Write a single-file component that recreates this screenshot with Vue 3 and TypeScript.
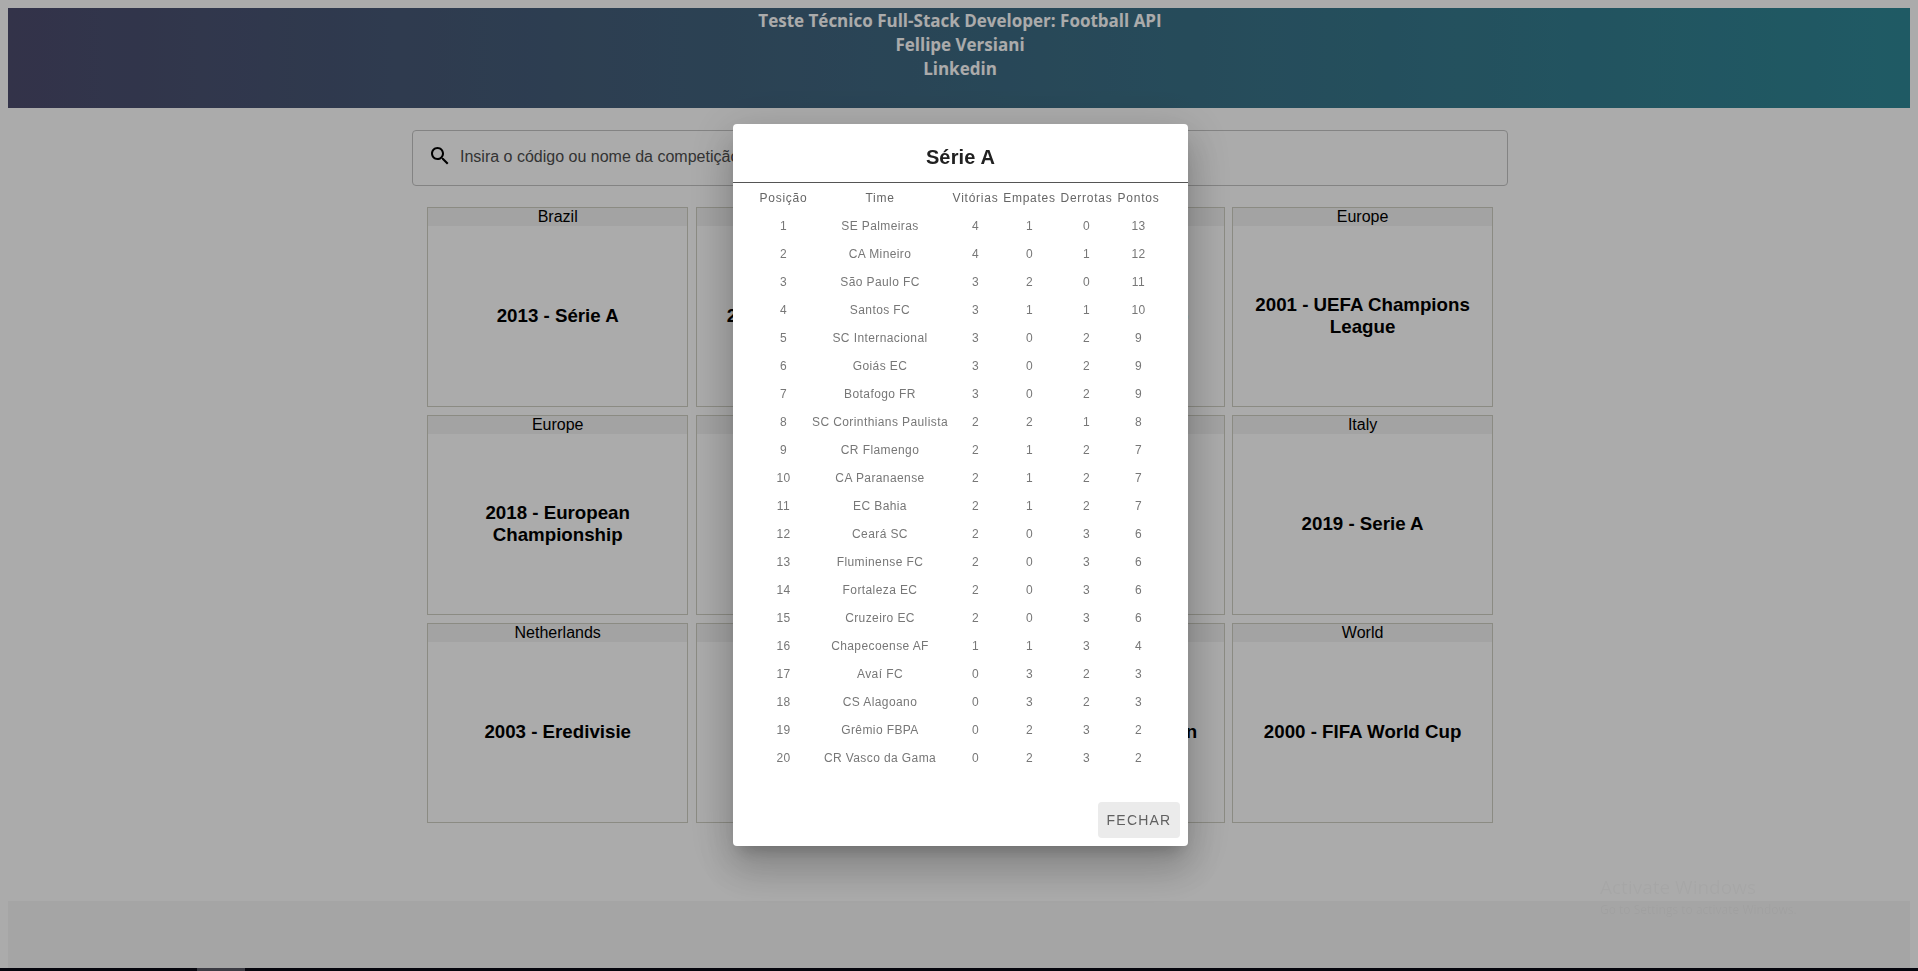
<script setup lang="ts">
interface Competition {
    area: string;
    title: string;
}
interface Standing {
    team: string;
    won: number;
    draw: number;
    lost: number;
    points: number;
}

const competitions: Competition[] = [
    { area: 'Brazil', title: '2013 - Série A' },
    { area: 'England', title: '2021 - Premier League' },
    { area: 'England', title: '2016 - Championship' },
    { area: 'Europe', title: '2001 - UEFA Champions League' },
    { area: 'Europe', title: '2018 - European Championship' },
    { area: 'France', title: '2015 - Ligue 1' },
    { area: 'Germany', title: '2002 - Bundesliga' },
    { area: 'Italy', title: '2019 - Serie A' },
    { area: 'Netherlands', title: '2003 - Eredivisie' },
    { area: 'Portugal', title: '2017 - Primeira Liga' },
    { area: 'Spain', title: '2014 - Primera Division' },
    { area: 'World', title: '2000 - FIFA World Cup' },
];

const standings: Standing[] = [
    { team: 'SE Palmeiras', won: 4, draw: 1, lost: 0, points: 13 },
    { team: 'CA Mineiro', won: 4, draw: 0, lost: 1, points: 12 },
    { team: 'São Paulo FC', won: 3, draw: 2, lost: 0, points: 11 },
    { team: 'Santos FC', won: 3, draw: 1, lost: 1, points: 10 },
    { team: 'SC Internacional', won: 3, draw: 0, lost: 2, points: 9 },
    { team: 'Goiás EC', won: 3, draw: 0, lost: 2, points: 9 },
    { team: 'Botafogo FR', won: 3, draw: 0, lost: 2, points: 9 },
    { team: 'SC Corinthians Paulista', won: 2, draw: 2, lost: 1, points: 8 },
    { team: 'CR Flamengo', won: 2, draw: 1, lost: 2, points: 7 },
    { team: 'CA Paranaense', won: 2, draw: 1, lost: 2, points: 7 },
    { team: 'EC Bahia', won: 2, draw: 1, lost: 2, points: 7 },
    { team: 'Ceará SC', won: 2, draw: 0, lost: 3, points: 6 },
    { team: 'Fluminense FC', won: 2, draw: 0, lost: 3, points: 6 },
    { team: 'Fortaleza EC', won: 2, draw: 0, lost: 3, points: 6 },
    { team: 'Cruzeiro EC', won: 2, draw: 0, lost: 3, points: 6 },
    { team: 'Chapecoense AF', won: 1, draw: 1, lost: 3, points: 4 },
    { team: 'Avaí FC', won: 0, draw: 3, lost: 2, points: 3 },
    { team: 'CS Alagoano', won: 0, draw: 3, lost: 2, points: 3 },
    { team: 'Grêmio FBPA', won: 0, draw: 2, lost: 3, points: 2 },
    { team: 'CR Vasco da Gama', won: 0, draw: 2, lost: 3, points: 2 },
];
</script>

<template>
    <div class="page">
        <header class="top">
            <div>Teste Técnico Full-Stack Developer: Football API</div>
            <div>Fellipe Versiani</div>
            <a class="top-link" href="#">Linkedin</a>
        </header>

        <div class="search">
            <svg class="search-icon" viewBox="0 0 24 24" width="24" height="24">
                <path d="M15.5 14h-.79l-.28-.27C15.41 12.59 16 11.11 16 9.5 16 5.91 13.09 3 9.5 3S3 5.91 3 9.5 5.91 16 9.5 16c1.61 0 3.09-.59 4.23-1.57l.27.28v.79l5 4.99L20.49 19l-4.99-5zm-6 0C7.01 14 5 11.99 5 9.5S7.01 5 9.5 5 14 7.01 14 9.5 11.99 14 9.5 14z" />
            </svg>
            <input class="search-input" type="text" placeholder="Insira o código ou nome da competição">
        </div>

        <main class="cards">
            <article v-for="c in competitions" :key="c.title" class="card">
                <div class="card-area">{{ c.area }}</div>
                <div class="card-title">{{ c.title }}</div>
            </article>
        </main>

        <footer class="bottom" />
    </div>

    <div class="backdrop">
        <section class="dialog">
            <h2 class="dialog-title">Série A</h2>
            <div class="dialog-content">
                <table class="table">
                    <colgroup>
                        <col class="col-pos">
                        <col class="col-team">
                        <col class="col-won">
                        <col class="col-draw">
                        <col class="col-lost">
                        <col class="col-points">
                    </colgroup>
                    <thead>
                        <tr>
                            <th>Posição</th>
                            <th>Time</th>
                            <th>Vitórias</th>
                            <th>Empates</th>
                            <th>Derrotas</th>
                            <th>Pontos</th>
                        </tr>
                    </thead>
                    <tbody>
                        <tr v-for="(s, i) in standings" :key="s.team">
                            <td>{{ i + 1 }}</td>
                            <td>{{ s.team }}</td>
                            <td>{{ s.won }}</td>
                            <td>{{ s.draw }}</td>
                            <td>{{ s.lost }}</td>
                            <td>{{ s.points }}</td>
                        </tr>
                    </tbody>
                </table>
            </div>
            <div class="dialog-actions">
                <button class="close-btn" type="button">Fechar</button>
            </div>
        </section>
    </div>

    <div class="watermark">
        <div class="watermark-title">Activate Windows</div>
        <div class="watermark-sub">Go to Settings to activate Windows.</div>
    </div>

    <div class="taskbar">
        <span class="taskbar-item" />
    </div>
</template>

<style>
html, body {
    margin: 0;
    background: #fff;
    overflow: hidden;
}
</style>

<style scoped>
.page {
    box-sizing: border-box;
    height: 971px;
    padding: 8px 8px 3px;
    display: flex;
    flex-direction: column;
    align-items: center;
    font-family: "Liberation Sans", Arial, sans-serif;
}
.top {
    align-self: stretch;
    height: 100px;
    box-sizing: border-box;
    padding: 1px 0 0 2px;
    text-align: center;
    font-family: "Open Sans", sans-serif;
    font-weight: 700;
    font-size: 17px;
    line-height: 24px;
    color: #fff;
    background: linear-gradient(90deg, #4c4c6e, #2f8796);
}
.top-link {
    color: inherit;
    text-decoration: none;
}
.search {
    box-sizing: border-box;
    width: 1096px;
    height: 56px;
    margin: 22px 0 0 2px;
    padding-left: 15px;
    display: flex;
    align-items: center;
    gap: 8px;
    border: 1px solid #c4c4c4;
    border-radius: 4px;
}
.search-icon {
    flex: none;
    margin-top: -5px;
}
.search-input {
    flex: 1;
    border: 0;
    outline: 0;
    padding: 0 0 2px;
    background: transparent;
    font-family: "Liberation Sans", Arial, sans-serif;
    font-size: 16px;
}
.search-input::placeholder {
    color: #4d4d4d;
    opacity: 1;
}
.cards {
    margin-top: 21px;
    padding-left: 2.3px;
    display: grid;
    grid-template-columns: repeat(4, 261px);
    grid-auto-rows: 200px;
    gap: 8px 7.3px;
}
.card {
    box-sizing: border-box;
    display: flex;
    flex-direction: column;
    border: 1px solid #d0d0c4;
}
.card-area {
    text-align: center;
    font-size: 16px;
    line-height: 18px;
    background: #f3f3f3;
}
.card-title {
    flex: 1;
    display: flex;
    align-items: center;
    justify-content: center;
    padding: 0 16px 1px;
    text-align: center;
    font-size: 18.72px;
    font-weight: 700;
    line-height: 22px;
}
.bottom {
    align-self: stretch;
    margin-top: auto;
    height: 67px;
    background: #f6f6f6;
}
.backdrop {
    position: fixed;
    inset: 0;
    box-sizing: border-box;
    display: flex;
    align-items: center;
    justify-content: center;
    padding: 0 0 1px 3px;
    background: rgba(0, 0, 0, 0.33);
    font-family: "Liberation Sans", Arial, sans-serif;
}
.dialog {
    box-sizing: border-box;
    width: 455px;
    height: 722px;
    display: flex;
    flex-direction: column;
    border-radius: 4px;
    background: #fff;
    box-shadow: 0 11px 15px -7px rgba(0, 0, 0, 0.2), 0 24px 38px 3px rgba(0, 0, 0, 0.14), 0 9px 46px 8px rgba(0, 0, 0, 0.12);
}
.dialog-title {
    margin: 0;
    height: 59px;
    box-sizing: border-box;
    padding-top: 20px;
    border-bottom: 1px solid #555;
    text-align: center;
    font-size: 20px;
    font-weight: 700;
    line-height: 26px;
    letter-spacing: 0.15px;
    color: #212121;
}
.dialog-content {
    padding: 0 26px 0 24px;
}
.table {
    width: 405px;
    table-layout: fixed;
    border-collapse: collapse;
    font-size: 12px;
    letter-spacing: 0.4px;
}
.col-pos { width: 53px; }
.col-team { width: 140px; }
.col-won { width: 51px; }
.col-draw { width: 57px; }
.col-lost { width: 57px; }
.col-points { width: 47px; }
.table th {
    height: 29px;
    padding: 0;
    font-weight: 400;
    letter-spacing: 0.75px;
    color: #666;
    text-align: center;
    white-space: nowrap;
}
.table td {
    height: 28px;
    padding: 0;
    color: #777;
    text-align: center;
    white-space: nowrap;
}
.dialog-actions {
    margin-top: auto;
    padding: 8px;
    display: flex;
    justify-content: flex-end;
}
.close-btn {
    width: 82px;
    height: 36px;
    padding: 0;
    border: 0;
    border-radius: 4px;
    background: #ebebeb;
    color: #616161;
    font-family: "Liberation Sans", Arial, sans-serif;
    font-size: 14px;
    font-weight: 400;
    letter-spacing: 1.2px;
    text-transform: uppercase;
}
.watermark {
    position: fixed;
    left: 1600px;
    top: 874px;
    font-family: "Open Sans", sans-serif;
    color: rgba(0, 0, 0, 0.03);
}
.watermark-title {
    font-size: 19px;
    line-height: 27px;
}
.watermark-sub {
    font-size: 12px;
    line-height: 18px;
}
.taskbar {
    position: fixed;
    left: 0;
    right: 0;
    bottom: 0;
    height: 3px;
    background: #06060e;
}
.taskbar-item {
    position: absolute;
    left: 197px;
    top: 0;
    width: 48px;
    height: 3px;
    background: #3c3c44;
}
</style>
